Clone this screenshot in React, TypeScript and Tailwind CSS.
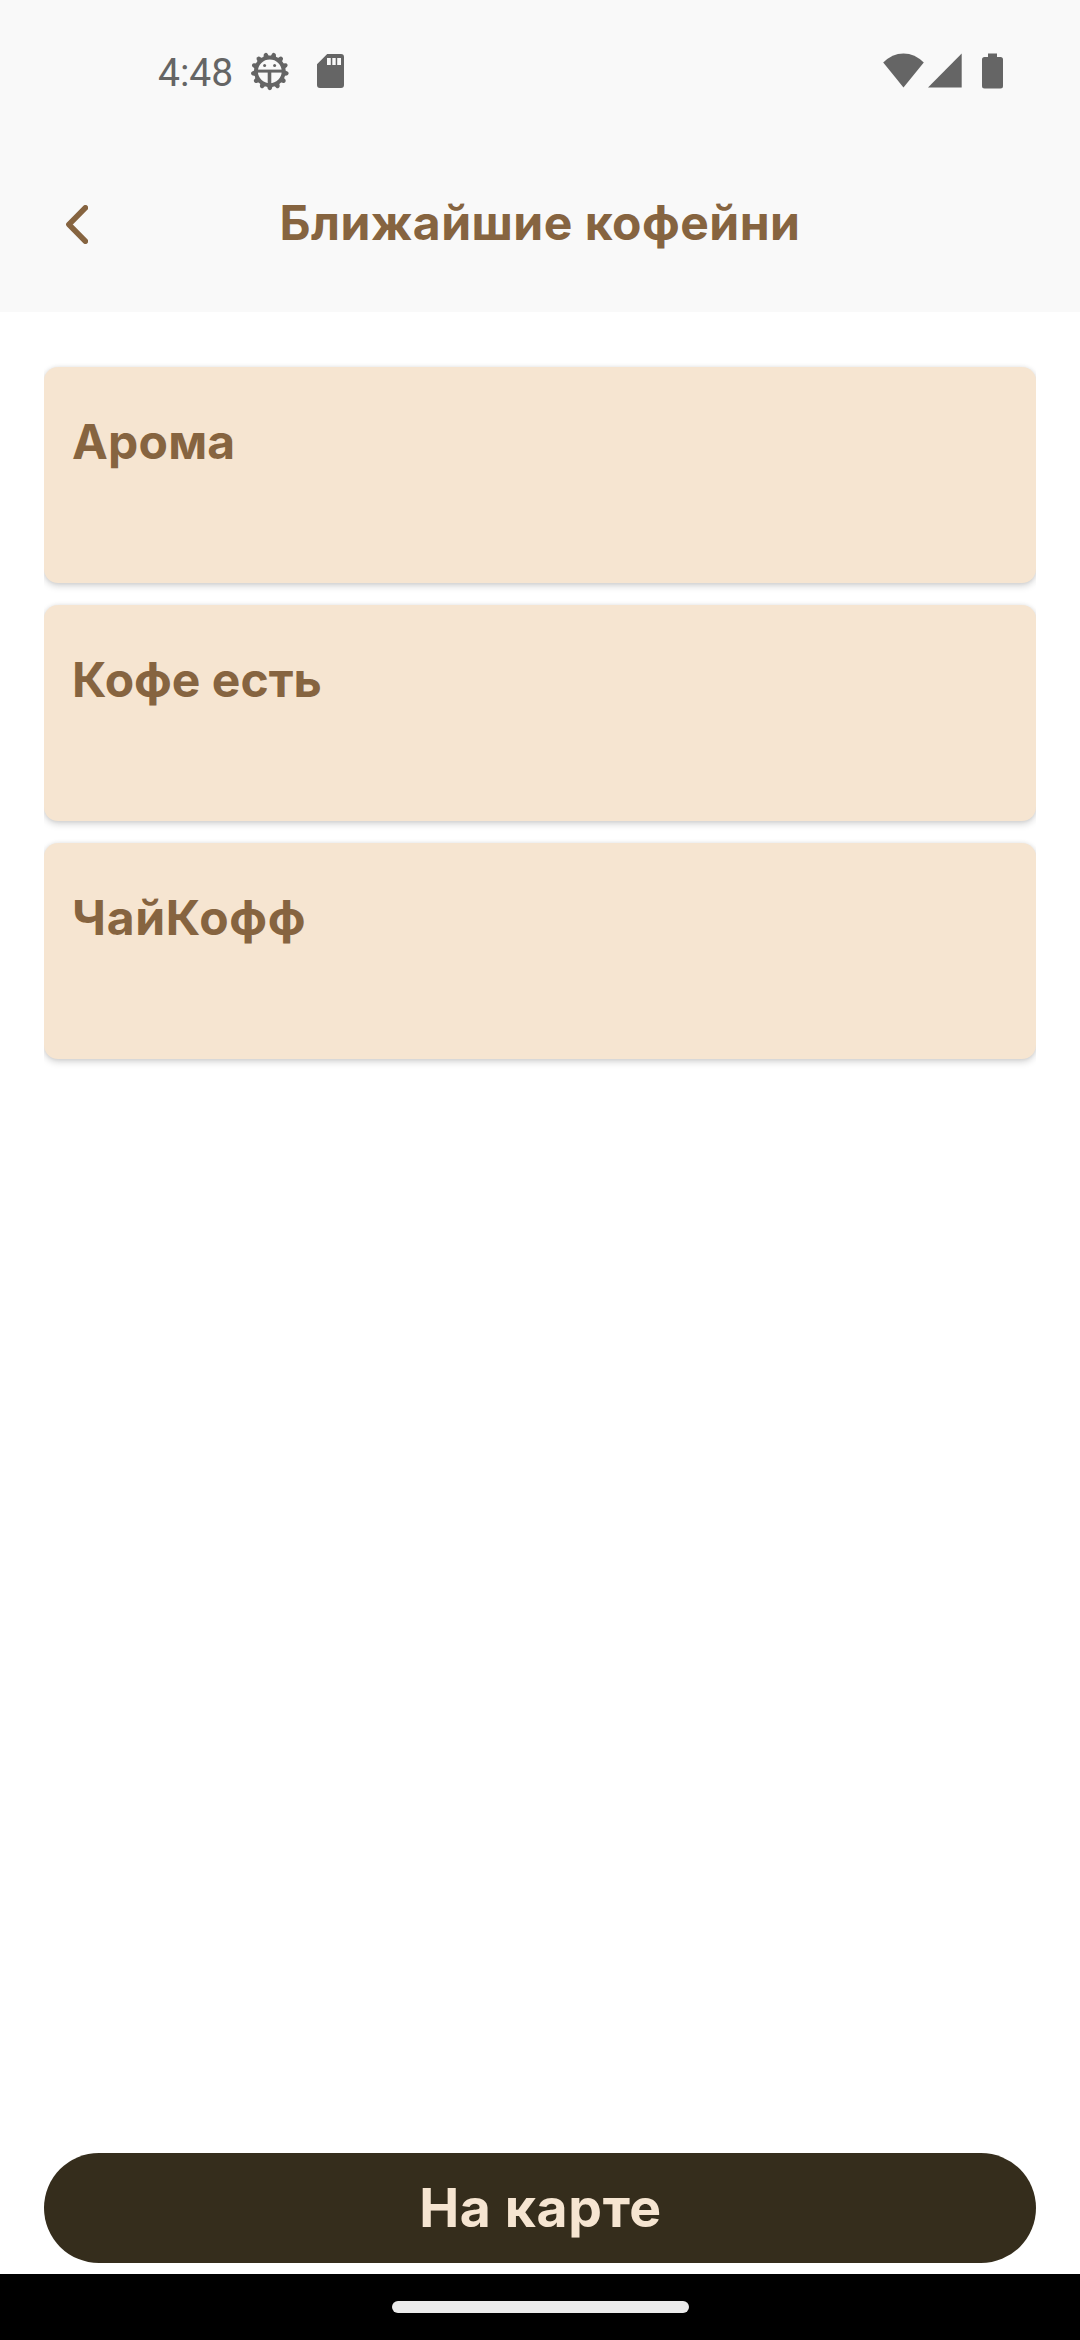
import React from "react";

const cafes = [
  { name: "Арома", spacing: "tracking-[0.2px]" },
  { name: "Кофе есть", spacing: "tracking-[0px]" },
  { name: "ЧайКофф", spacing: "tracking-[0.7px]" },
];

const teeth = Array.from({ length: 13 }, (_, i) => (i * 360) / 13);

function GearFaceIcon() {
  return (
    <svg className="h-10 w-10" viewBox="0 0 40 40" fill="none">
      {teeth.map((angle) => (
        <path
          key={angle}
          d="M16.6 33.5 L17.8 37.8 Q18.3 39.2 19.8 39.2 Q21.3 39.2 21.8 37.8 L23 33.5 Z"
          fill="#656565"
          transform={`rotate(${angle} 19.8 20.3)`}
        />
      ))}
      <circle cx="19.8" cy="20.3" r="13.9" stroke="#656565" strokeWidth="4" />
      <path d="M7 20.1 H32.6" stroke="#656565" strokeWidth="3" />
      <path d="M19.5 20 V33" stroke="#656565" strokeWidth="3.6" />
      <circle cx="14.6" cy="14.4" r="1.5" fill="#656565" />
      <circle cx="24.6" cy="14.4" r="1.5" fill="#656565" />
    </svg>
  );
}

function SdCardIcon() {
  return (
    <svg className="h-10 w-[27px]" viewBox="0 0 27 40">
      <path
        fillRule="evenodd"
        fill="#656565"
        d="M10.2 3 H24 Q27 3 27 6 V34 Q27 37 24 37 H3 Q0 37 0 34 V13.2 Z M10 7 V14 H13.8 V7 Z M15.3 7 V14 H18.7 V7 Z M20.2 7 V14 H24 V7 Z"
      />
    </svg>
  );
}

function StatusBar() {
  return (
    <div className="flex h-[120px] items-start justify-between pt-[51px] pr-[77px] pl-[158px]">
      <div className="flex items-start">
        <span className="mt-0.5 w-[92px] font-[Roboto,sans-serif] text-[39px] leading-[40px] font-normal text-[#656565]">
          4:48
        </span>
        <GearFaceIcon />
        <span className="w-[27px]" />
        <SdCardIcon />
      </div>
      <div className="flex items-start">
        <svg className="h-10 w-[41px]" viewBox="0 0 41 40">
          <path d="M20.5 36.4 L0.2 11.6 Q9 2.4 20.5 2.4 Q32 2.4 40.8 11.6 Z" fill="#656565" />
        </svg>
        <svg className="ml-1 h-10 w-[34px]" viewBox="0 0 34 40">
          <path d="M0 36.4 L33.7 2.4 V36.4 Z" fill="#656565" />
        </svg>
        <svg className="ml-5 h-10 w-[21px]" viewBox="0 0 21 40">
          <path
            d="M6 2.4 H15 V6 H18.5 Q21 6 21 8.5 V35 Q21 37.5 18.5 37.5 H2.5 Q0 37.5 0 35 V8.5 Q0 6 2.5 6 H6 Z"
            fill="#656565"
          />
        </svg>
      </div>
    </div>
  );
}

export default function App() {
  return (
    <div className="flex h-[2340px] w-[1080px] flex-col bg-white font-[Inter,sans-serif] font-bold">
      <header className="h-[312px] bg-[#f9f9f9]">
        <StatusBar />
        <div className="flex h-[192px] items-start px-[66px] pt-[73px]">
          <button className="w-[22px] pt-3" aria-label="Назад">
            <svg className="h-[39px] w-[22px]" viewBox="0 0 22 39" fill="none">
              <path
                d="M19.4 2.8 L2.9 19.5 L19.4 36.2"
                stroke="#866440"
                strokeWidth="5.5"
                strokeLinecap="round"
                strokeLinejoin="round"
              />
            </svg>
          </button>
          <h1 className="flex-1 pr-[22px] text-center text-[48px] leading-[60px] tracking-[0.49px] text-[#866440]">
            Ближайшие кофейни
          </h1>
        </div>
      </header>

      <main className="mx-11 flex flex-1 flex-col gap-[22px] overflow-x-clip pt-[55px]">
        {cafes.map((cafe) => (
          <section
            key={cafe.name}
            className="h-[216px] rounded-[14px] bg-[#f6e5d1] px-7 pt-[45px] shadow-[0_3px_7px_rgba(0,0,0,0.17),0_0_4px_rgba(0,0,0,0.08)]"
          >
            <h2 className={`text-[48px] leading-[60px] text-[#866440] ${cafe.spacing}`}>
              {cafe.name}
            </h2>
          </section>
        ))}
      </main>

      <button className="mx-11 mb-[11px] flex h-[110px] items-start justify-center rounded-[55px] bg-[#352d1c] pt-[22px] pl-px text-[53.5px] leading-[66px] tracking-[0.65px] text-[#f6e5d1]">
        На карте
      </button>

      <footer className="flex h-[66px] justify-center bg-black pt-[27px]">
        <div className="h-3 w-[297px] rounded-[6px] bg-[#ebebeb]" />
      </footer>
    </div>
  );
}
